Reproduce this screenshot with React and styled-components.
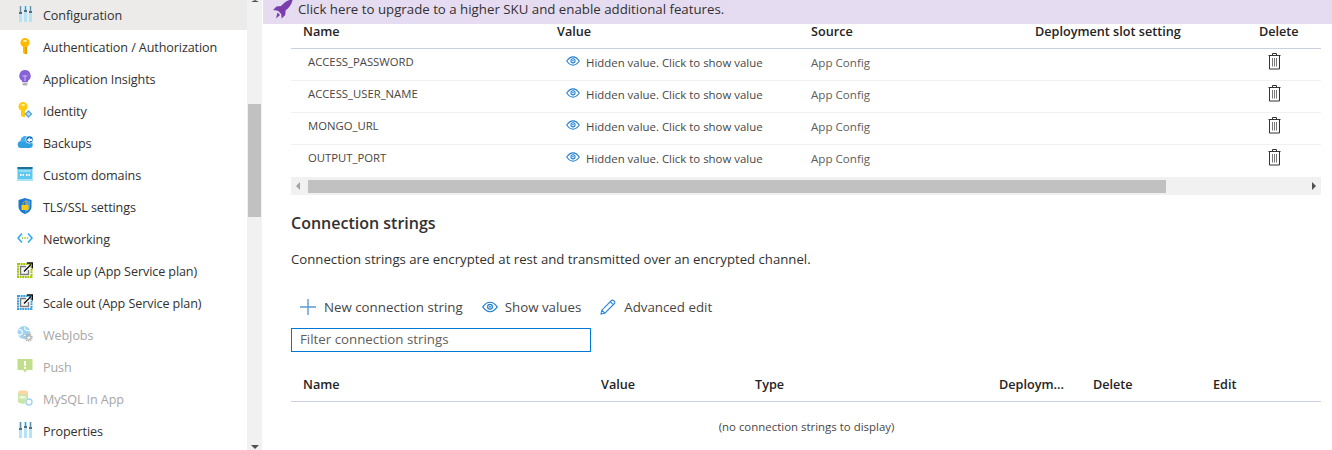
import React from "react";
import styled, { createGlobalStyle } from "styled-components";

const GlobalStyle = createGlobalStyle`
  html, body {
    margin: 0;
    padding: 0;
    height: 450px;
    overflow: hidden;
    background: #fff;
  }
  * { box-sizing: border-box; }
`;

const Page = styled.div`
  display: flex;
  width: 1332px;
  height: 450px;
  overflow: hidden;
  font-family: "Open Sans", "Noto Sans", sans-serif;
  color: #323130;
`;

// SIDEBAR
const Sidebar = styled.nav`
  width: 247px;
  flex-shrink: 0;
  margin-top: -2px;
`;
const MenuItem = styled.div`
  display: flex;
  align-items: center;
  height: 32px;
  padding-left: 17px;
  background: ${(p) => (p.$selected ? "#edebe9" : "transparent")};
  color: ${(p) => (p.$disabled ? "#a6a6a6" : "#323130")};
`;
const MenuIconBox = styled.span`
  display: flex;
  width: 16px;
  height: 16px;
  margin-right: 10px;
  opacity: ${(p) => (p.$disabled ? 0.45 : 1)};
`;
const MenuLabel = styled.span`
  font-size: 12.6px;
  letter-spacing: -0.1px;
  white-space: nowrap;
  position: relative;
  top: 1px;
`;
const Track = styled.div`
  display: flex;
  flex-direction: column;
  align-items: center;
  width: 15px;
  flex-shrink: 0;
  height: 450px;
  background: #f1f1f1;
`;
const UpArrow = styled.div`
  width: 0;
  height: 0;
  border-left: 4px solid transparent;
  border-right: 4px solid transparent;
  border-bottom: 2px solid #505050;
`;
const Thumb = styled.div`
  width: 13px;
  height: 113px;
  margin-top: 102px;
  background: #c1c1c1;
`;
const DownArrow = styled.div`
  width: 0;
  height: 0;
  margin-top: auto;
  margin-bottom: 1px;
  border-left: 4px solid transparent;
  border-right: 4px solid transparent;
  border-top: 4px solid #505050;
`;
// END SIDEBAR

const Main = styled.main`
  flex: 1;
  min-width: 0;
  padding-left: 1px;
`;
const Banner = styled.div`
  display: flex;
  height: 24px;
  padding-left: 10px;
  background: #e5dcf1;
  overflow: hidden;
`;
const RocketIcon = styled.svg`
  width: 20px;
  height: 20px;
  flex-shrink: 0;
`;
const BannerText = styled.span`
  margin-left: 5px;
  font-size: 13.28px;
  line-height: 18px;
  color: #323130;
  white-space: nowrap;
`;
const Content = styled.div`
  padding: 0 11px 0 28px;
`;
const Row = styled.div`
  display: grid;
  grid-template-columns: ${(p) => p.$cols};
  padding-left: 12px;
`;
const HeadRow = styled(Row)`
  height: ${(p) => p.$height}px;
  align-items: end;
  padding-bottom: 10px;
  border-bottom: 1px solid #c8d0e2;
`;
const HeadCell = styled.div`
  font-size: 12.65px;
  line-height: 14px;
  font-weight: 600;
  color: #252423;
  white-space: nowrap;
`;
const BodyRow = styled(Row)`
  height: 32px;
  align-items: center;
  border-bottom: 1px solid ${(p) => (p.$last ? "transparent" : "#f1f1f1")};
`;
const NameCell = styled.div`
  padding-left: 5px;
  font-size: 11.3px;
  color: #484644;
  position: relative;
  top: -3px;
`;
const ValueCell = styled.div`
  display: flex;
  align-items: center;
  padding-left: 9px;
  font-size: 11.42px;
  color: #484644;
  white-space: nowrap;
  position: relative;
  top: -2px;
`;
const EyeSlot = styled.span`
  display: flex;
  margin-right: 6px;
  margin-top: -3px;
`;
const SourceCell = styled.div`
  font-size: 11.6px;
  color: #605e5c;
  position: relative;
  top: -2px;
`;
const DeleteCell = styled.div`
  display: flex;
  padding-left: 9px;
  position: relative;
  top: -3px;
`;
const HScroll = styled.div`
  display: flex;
  align-items: center;
  height: 18px;
  background: #f1f1f1;
`;
const LeftArrow = styled.div`
  width: 0;
  height: 0;
  margin: 0 8px 0 5px;
  border-top: 4px solid transparent;
  border-bottom: 4px solid transparent;
  border-right: 4px solid #a3a3a3;
`;
const HThumb = styled.div`
  width: 858px;
  height: 13px;
  background: #c1c1c1;
`;
const RightArrow = styled.div`
  width: 0;
  height: 0;
  margin: 0 5px 0 auto;
  border-top: 4px solid transparent;
  border-bottom: 4px solid transparent;
  border-left: 4px solid #505050;
`;
const Heading = styled.h2`
  margin: 18px 0 0;
  font-size: 16px;
  line-height: 20px;
  font-weight: 600;
  color: #323130;
`;
const Description = styled.p`
  margin: 16px 0 0;
  font-size: 13.2px;
  line-height: 20px;
  color: #323130;
`;
const Toolbar = styled.div`
  display: flex;
  align-items: center;
  height: 24px;
  margin-top: 26px;
  padding-left: 9px;
`;
const ToolButton = styled.div`
  display: flex;
  align-items: center;
  margin-right: ${(p) => p.$gap}px;
  font-size: 13.3px;
  color: #484644;
  white-space: nowrap;
`;
const ToolIcon = styled.span`
  display: flex;
  margin-right: ${(p) => p.$gap}px;
`;
const FilterBox = styled.div`
  display: flex;
  align-items: center;
  width: 300px;
  height: 24px;
  margin-top: 9px;
  padding: 0 0 2px 8px;
  border: 1px solid #0078d4;
  font-size: 13.3px;
  color: #605e5c;
`;
const EmptyRow = styled.div`
  margin-top: 16px;
  font-size: 11.44px;
  line-height: 18px;
  text-align: center;
  color: #484644;
  padding-left: 1px;
`;

const Sliders = () => (
  <svg width="16" height="16" viewBox="0 0 16 16">
    <rect x="2" y="0" width="3" height="16" fill="#b3e3f6" />
    <rect x="7" y="0" width="3" height="16" fill="#b3e3f6" />
    <rect x="12" y="0" width="3" height="16" fill="#b3e3f6" />
    <rect x="3" y="0" width="1" height="7" fill="#5f8fae" />
    <rect x="8" y="0" width="1" height="5" fill="#5f8fae" />
    <rect x="13" y="0" width="1" height="6" fill="#5f8fae" />
    <rect x="2" y="6" width="3" height="2" fill="#5a6e7c" />
    <rect x="7" y="4" width="3" height="2" fill="#5a6e7c" />
    <rect x="12" y="5" width="3" height="2" fill="#5a6e7c" />
  </svg>
);

const Key = () => (
  <svg width="16" height="16" viewBox="0 0 16 16">
    <path d="M8 0a4.6 4.6 0 0 1 2 8.7V15l-1 1H7.3L6 14.800V8.700A4.600 4.600 0 0 1 8 0z" fill="#ffb900" />
    <ellipse cx="8" cy="3" rx="2" ry="1" fill="#fff1b0" />
    <rect x="8" y="9" width="2" height="7" fill="#e89d00" />
  </svg>
);

const Bulb = () => (
  <svg width="16" height="16" viewBox="0 0 16 16">
    <path d="M8 0a5.800 5.800 0 0 1 3 10.700V12H5v-1.300A5.800 5.800 0 0 1 8 0z" fill="#8661d8" />
    <path d="M5.500 5.500c1 1.500 2 0 2.500 0s1.500 1.500 2.500 0M8 6v5" stroke="#d9ccf5" strokeWidth="0.9" fill="none" />
    <rect x="5.500" y="12.500" width="5" height="3" rx="1" fill="#b4b4b4" />
  </svg>
);

const IdentityKey = () => (
  <svg width="16" height="16" viewBox="0 0 16 16">
    <path d="M6 0a4.500 4.500 0 0 1 2 8.500V15H6L4 13.500V8.500A4.500 4.500 0 0 1 6 0z" fill="#ffc90e" />
    <ellipse cx="6" cy="3" rx="2" ry="1" fill="#fff1b0" />
    <path d="M11.500 8l4 4-4 4-4-4z" fill="#5ea9e0" />
    <path d="M11.500 10l2 2-2 2-2-2z" fill="#b6dcf5" />
  </svg>
);

const Cloud = () => (
  <svg width="16" height="16" viewBox="0 0 16 16">
    <circle cx="4.200" cy="10.500" r="3.500" fill="#2f9fe0" />
    <circle cx="8.500" cy="7" r="5" fill="#3fb0ec" />
    <rect x="4.200" y="8" width="8.500" height="6" fill="#2f9fe0" />
    <circle cx="12.500" cy="10.800" r="3.200" fill="#2f9fe0" />
    <circle cx="12.500" cy="5.500" r="4" fill="#fff" />
    <circle cx="12.500" cy="5.500" r="3.300" fill="#0f6cbd" />
    <path d="M9.800 6l3-2.800v1.600h2.400v2.200h-2.400v1.500z" fill="#fff" />
  </svg>
);

const Domains = () => (
  <svg width="16" height="16" viewBox="0 0 16 16">
    <rect x="0.500" y="1" width="15" height="14" fill="#5ec8ee" />
    <rect x="0.500" y="1" width="15" height="2" fill="#1f6f99" />
    <rect x="2" y="4.500" width="12" height="1" fill="#fff" opacity="0.7" />
    <path d="M3 9h1.500M5.500 9H7M9 9h1.500M11.500 9H13" stroke="#fff" strokeWidth="2" />
    <rect x="0.500" y="13" width="15" height="2" fill="#a6e4f7" />
  </svg>
);

const Shield = () => (
  <svg width="16" height="16" viewBox="0 0 16 16">
    <path d="M8 0l6.500 2v6.500C14.500 12.500 11 15 8 16 5 15 1.500 12.500 1.500 8.500V2z" fill="#1c78d0" />
    <path d="M8 1.500l5 1.500v5.500C13 11.500 10.500 13.500 8 14.500z" fill="#4ba3ea" />
    <path d="M6 7V5.500a2 2 0 0 1 4 0V7" stroke="#c9a227" strokeWidth="1" fill="none" />
    <rect x="4.500" y="7" width="7" height="5" rx="0.500" fill="#ffc90e" />
  </svg>
);

const Network = () => (
  <svg width="16" height="16" viewBox="0 0 16 16">
    <path d="M5 3.500L1 8l4 4.500" stroke="#2aa9f0" strokeWidth="1.500" fill="none" />
    <path d="M11 3.500L15 8l-4 4.500" stroke="#2aa9f0" strokeWidth="1.500" fill="none" />
    <circle cx="5.500" cy="8" r="0.800" fill="#7ab800" />
    <circle cx="8" cy="8" r="0.800" fill="#7ab800" />
    <circle cx="10.500" cy="8" r="0.800" fill="#7ab800" />
  </svg>
);

const Scale = ({ color }) => (
  <svg width="16" height="16" viewBox="0 0 16 16">
    <rect x="1" y="2" width="13.500" height="13" fill="none" stroke={color} strokeWidth="2" strokeDasharray="2 0.600" />
    <path d="M9 4.500H3.500v8h8V8" fill="#f4f4f4" stroke="#7a7a7a" strokeWidth="1.400" />
    <path d="M7 9.500L14 2.500M10 1h5.500v5.500" fill="none" stroke="#111" strokeWidth="1.500" />
  </svg>
);

const WebJobs = () => (
  <svg width="16" height="16" viewBox="0 0 16 16">
    <circle cx="7" cy="6.500" r="6.500" fill="#2f9fe0" />
    <path d="M2 3.500c3 .5 4 2 3 4S2.500 9.500 1 8M8 1c-1 2 0 3 2 3.500s3 0 3 0M7 9c2 0 2 2 1.500 4" stroke="#fff" strokeWidth="1.100" fill="none" />
    <circle cx="11.500" cy="11.500" r="3.200" fill="none" stroke="#555" strokeWidth="1.800" strokeDasharray="1.300 0.700" />
    <circle cx="11.500" cy="11.500" r="2" fill="none" stroke="#555" strokeWidth="1" />
  </svg>
);

const Push = () => (
  <svg width="16" height="16" viewBox="0 0 16 16">
    <path d="M0.500 1h15v11h-5.500L8 14.500 6 12H0.500z" fill="#7ab800" />
    <rect x="7" y="3" width="2" height="5" fill="#fff" />
    <rect x="7" y="9" width="2" height="2" fill="#fff" />
  </svg>
);

const MySql = () => (
  <svg width="16" height="16" viewBox="0 0 16 16">
    <path d="M1 2.500v9c0 1.300 2.500 2.200 5 2.200s5-.9 5-2.200v-9z" fill="#8cc63f" />
    <ellipse cx="6" cy="2.500" rx="5" ry="2.200" fill="#f3a93c" />
    <rect x="2.500" y="6" width="6" height="2.500" fill="#fff" opacity="0.7" />
    <circle cx="12" cy="12" r="4" fill="#fff" />
    <circle cx="12" cy="12" r="3" fill="none" stroke="#2f9fe0" strokeWidth="1.400" />
  </svg>
);

const Rocket = () => (
  <RocketIcon viewBox="0 0 20 20">
    <path d="M19.800 -1C15 0 11 2.500 8 6L3.500 6.500 0 10l5 .8 3.200 3.200.5 4.500 3.500-3.500.5-4.800C16 8 19 4 19.800 -1z" fill="#7a3dab" />
    <path d="M4.500 12.500l2.500 2.500-4 3.500z" fill="#7a3dab" />
  </RocketIcon>
);

const Eye = ({ size = 14 }) => (
  <svg width={size} height={Math.round(size * 0.72)} viewBox="0 0 16 11.500">
    <path d="M.8 5.700C3 2.500 5.500 1 8 1s5 1.500 7.200 4.700C13 8.900 10.500 10.500 8 10.500S3 8.900.8 5.700z" fill="none" stroke="#1d7fd1" strokeWidth="1.200" />
    <circle cx="8" cy="5.500" r="2.400" fill="none" stroke="#1d7fd1" strokeWidth="1.200" />
    <circle cx="8" cy="5.500" r="0.900" fill="#1d7fd1" />
  </svg>
);

const Trash = () => (
  <svg width="13" height="17" viewBox="0 0 13 17">
    <path d="M4.500 2V.5h4V2M.5 2.500h12M1.500 2.500v13.500h10V2.500" fill="none" stroke="#333" strokeWidth="1" />
    <path d="M4.500 5v8.500M6.500 5v8.500M8.500 5v8.500" stroke="#777" strokeWidth="1" />
  </svg>
);

const Plus = () => (
  <svg width="16" height="16" viewBox="0 0 16 16">
    <path d="M8 0v16M0 8h16" stroke="#5b9bd5" strokeWidth="1.400" />
  </svg>
);

const Pencil = () => (
  <svg width="16" height="16" viewBox="0 0 16 16">
    <path d="M1 15l.8-3.800L11.500 1.500a1.400 1.400 0 0 1 2 0l1 1a1.400 1.400 0 0 1 0 2L4.800 14.200zM1.800 11.200l3 3M10.300 2.700l3 3" fill="none" stroke="#2b88d8" strokeWidth="1.100" />
  </svg>
);

const menu = [
  { label: "Configuration", icon: <Sliders />, selected: true },
  { label: "Authentication / Authorization", icon: <Key /> },
  { label: "Application Insights", icon: <Bulb /> },
  { label: "Identity", icon: <IdentityKey /> },
  { label: "Backups", icon: <Cloud /> },
  { label: "Custom domains", icon: <Domains /> },
  { label: "TLS/SSL settings", icon: <Shield /> },
  { label: "Networking", icon: <Network /> },
  { label: "Scale up (App Service plan)", icon: <Scale color="#a4c400" /> },
  { label: "Scale out (App Service plan)", icon: <Scale color="#3aa0e0" /> },
  { label: "WebJobs", icon: <WebJobs />, disabled: true },
  { label: "Push", icon: <Push />, disabled: true },
  { label: "MySQL In App", icon: <MySql />, disabled: true },
  { label: "Properties", icon: <Sliders /> },
];

const settings = ["ACCESS_PASSWORD", "ACCESS_USER_NAME", "MONGO_URL", "OUTPUT_PORT"];

const settingCols = "254px 254px 224px 224px 1fr";
const connCols = "298px 154px 244px 94px 120px 1fr";

export default function App() {
  return (
    <Page>
      <GlobalStyle />
      <Sidebar>
        {menu.map((m) => (
          <MenuItem key={m.label} $selected={m.selected} $disabled={m.disabled}>
            <MenuIconBox $disabled={m.disabled}>{m.icon}</MenuIconBox>
            <MenuLabel>{m.label}</MenuLabel>
          </MenuItem>
        ))}
      </Sidebar>
      <Track>
        <UpArrow />
        <Thumb />
        <DownArrow />
      </Track>
      <Main>
        <Banner>
          <Rocket />
          <BannerText>Click here to upgrade to a higher SKU and enable additional features.</BannerText>
        </Banner>
        <Content>
          <HeadRow $cols={settingCols} $height={25}>
            <HeadCell>Name</HeadCell>
            <HeadCell>Value</HeadCell>
            <HeadCell>Source</HeadCell>
            <HeadCell>Deployment slot setting</HeadCell>
            <HeadCell>Delete</HeadCell>
          </HeadRow>
          {settings.map((name, i) => (
            <BodyRow key={name} $cols={settingCols} $last={i === settings.length - 1}>
              <NameCell>{name}</NameCell>
              <ValueCell>
                <EyeSlot><Eye /></EyeSlot>
                Hidden value. Click to show value
              </ValueCell>
              <SourceCell>App Config</SourceCell>
              <div />
              <DeleteCell><Trash /></DeleteCell>
            </BodyRow>
          ))}
          <HScroll>
            <LeftArrow />
            <HThumb />
            <RightArrow />
          </HScroll>
          <Heading>Connection strings</Heading>
          <Description>Connection strings are encrypted at rest and transmitted over an encrypted channel.</Description>
          <Toolbar>
            <ToolButton $gap={19}>
              <ToolIcon $gap={8}><Plus /></ToolIcon>
              New connection string
            </ToolButton>
            <ToolButton $gap={19}>
              <ToolIcon $gap={7}><Eye size={16} /></ToolIcon>
              Show values
            </ToolButton>
            <ToolButton $gap={0}>
              <ToolIcon $gap={8}><Pencil /></ToolIcon>
              Advanced edit
            </ToolButton>
          </Toolbar>
          <FilterBox>Filter connection strings</FilterBox>
          <HeadRow $cols={connCols} $height={50}>
            <HeadCell>Name</HeadCell>
            <HeadCell>Value</HeadCell>
            <HeadCell>Type</HeadCell>
            <HeadCell>Deploym...</HeadCell>
            <HeadCell>Delete</HeadCell>
            <HeadCell>Edit</HeadCell>
          </HeadRow>
          <EmptyRow>(no connection strings to display)</EmptyRow>
        </Content>
      </Main>
    </Page>
  );
}
